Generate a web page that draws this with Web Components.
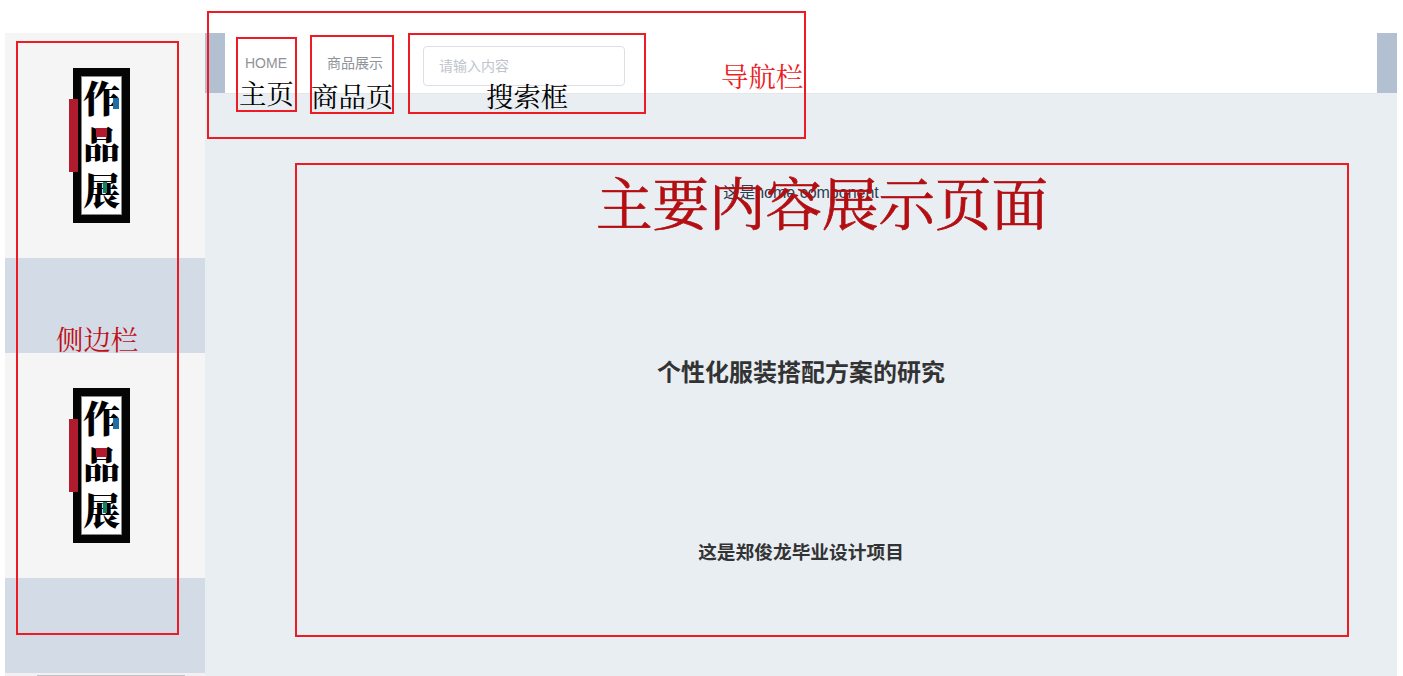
<!DOCTYPE html>
<html lang="zh">
<head>
<meta charset="utf-8">
<title>作品展</title>
<style>
  html, body { margin: 0; height: 676px; overflow: hidden; background: #fff; }
  body { font-family: "Liberation Sans", "Noto Sans CJK SC", sans-serif; }
</style>
</head>
<body>
<app-shell>
  <side-bar></side-bar>
  <main-pane>
    <top-nav slot="head"></top-nav>
    <home-view></home-view>
  </main-pane>
</app-shell>

<note-box x="16" y="41" w="163" h="594"></note-box>
<note-box x="207" y="11" w="599" h="128"></note-box>
<note-box x="236" y="37" w="61" h="75"></note-box>
<note-box x="310" y="35" w="84" h="79"></note-box>
<note-box x="408" y="33" w="238" h="81"></note-box>
<note-box x="295" y="163" w="1054" h="474"></note-box>

<note-label x="721" y="59" size="27.4" color="#ed1c24">导航栏</note-label>
<note-label x="239" y="76" size="27.4" color="#000">主页</note-label>
<note-label x="311" y="79" size="27.4" color="#000">商品页</note-label>
<note-label x="486" y="79" size="27.4" color="#000">搜索框</note-label>
<note-label x="56" y="322" size="27.4" color="#c00f17">侧边栏</note-label>
<note-label x="596" y="167" size="56.5" color="#b30f13" stroke="0.7">主要内容展示页面</note-label>

<script>
class AppShell extends HTMLElement {
  constructor() {
    super();
    this.attachShadow({ mode: "open" });
    this.shadowRoot.innerHTML = `
      <style>
        :host { display: flex; width: 1392px; height: 643px; margin: 33px 0 0 5px; }
      </style>
      <slot></slot>
    `;
  }
}

class SideBar extends HTMLElement {
  constructor() {
    super();
    this.attachShadow({ mode: "open" });
    this.shadowRoot.innerHTML = `
      <style>
        :host { display: flex; flex-direction: column; flex: none; width: 200px; background: #d3dce6; }
        .list { flex: 1; display: flex; flex-direction: column; gap: 95px; }
        .track { height: 3px; background: #f1f1f4; padding-left: 32px; }
        .thumb { width: 148px; height: 1px; margin-top: 2px; background: #c1c1c1; }
      </style>
      <div class="list">
        <logo-card></logo-card>
        <logo-card></logo-card>
      </div>
      <div class="track"><div class="thumb"></div></div>
    `;
  }
}

class LogoCard extends HTMLElement {
  constructor() {
    super();
    this.attachShadow({ mode: "open" });
    this.shadowRoot.innerHTML = `
      <style>
        :host { display: block; height: 225px; padding: 35px 0 0 68px; box-sizing: border-box; background: #f5f5f5; }
        .frame {
          position: relative; box-sizing: border-box; width: 57px; height: 155px;
          border: 8px solid #050505; background: #fff; outline: 1px solid #888; outline-offset: -9px;
          display: flex; flex-direction: column; align-items: center; gap: 8px; padding-top: 2px;
          font: 900 37px/38px "Noto Serif CJK SC", "Noto Sans CJK SC", serif; color: #000;
        }
        span { display: block; height: 38px; }
        .bar { position: absolute; left: -12px; top: 23px; width: 9px; height: 73px; background: #b01c2e; }
        .dot { position: absolute; }
        .blue { left: 32px; top: 22px; width: 6px; height: 11px; background: #1d6fa5; }
        .red { left: 15px; top: 52px; width: 11px; height: 9px; background: #b01c2e; }
        .green { left: 22px; top: 106px; width: 4px; height: 11px; background: #1b7f5c; }
      </style>
      <div class="frame">
        <i class="bar"></i>
        <span>作</span><span>品</span><span>展</span>
        <i class="dot blue"></i><i class="dot red"></i><i class="dot green"></i>
      </div>
    `;
  }
}

class MainPane extends HTMLElement {
  constructor() {
    super();
    this.attachShadow({ mode: "open" });
    this.shadowRoot.innerHTML = `
      <style>
        :host { display: flex; flex-direction: column; flex: 1; min-width: 0; height: 643px; background: #e9eef3; }
      </style>
      <slot name="head"></slot>
      <slot></slot>
    `;
  }
}

class TopNav extends HTMLElement {
  constructor() {
    super();
    this.attachShadow({ mode: "open" });
    this.shadowRoot.innerHTML = `
      <style>
        :host { display: block; flex: none; height: 60px; padding: 0 20px; background: #b3c0d1; }
        ul {
          position: relative; display: flex; box-sizing: border-box; height: 61px; margin: 0; padding: 0;
          list-style: none; background: #fff; border-bottom: 1px solid #e6e6e6;
        }
        li { padding: 0 20px; font-size: 14px; line-height: 60px; color: #909399; }
        li.search { padding-top: 13px; }
        input {
          display: block; box-sizing: border-box; width: 202px; height: 40px; padding: 0 15px;
          border: 1px solid #dcdfe6; border-radius: 4px; outline: 0; background: #fff;
          font: 14px "Liberation Sans", "Noto Sans CJK SC", sans-serif; color: #606266;
        }
        input::placeholder { color: #c0c4cc; opacity: 1; }
      </style>
      <ul>
        <li>HOME</li>
        <li>商品展示</li>
        <li class="search"><input placeholder="请输入内容"></li>
      </ul>
    `;
  }
}

class HomeView extends HTMLElement {
  constructor() {
    super();
    this.attachShadow({ mode: "open" });
    this.shadowRoot.innerHTML = `
      <style>
        :host { display: block; flex: 1; padding-top: 90px; text-align: center; color: #2c3e50; }
        p { margin: 0; font-size: 16px; line-height: 20px; }
        h1 { margin: 154px 0 0; font-size: 24px; line-height: 32px; color: #333; }
        h3 { margin: 151px 0 0; font-size: 18.72px; line-height: 26px; color: #333; }
      </style>
      <p>这是home component</p>
      <h1>个性化服装搭配方案的研究</h1>
      <h3>这是郑俊龙毕业设计项目</h3>
    `;
  }
}

// the red boxes drawn over the screenshot
class NoteBox extends HTMLElement {
  constructor() {
    super();
    this.attachShadow({ mode: "open" });
    this.shadowRoot.innerHTML = `
      <style>
        :host { position: absolute; box-sizing: border-box; border: 2px solid #ed1c24; pointer-events: none; }
      </style>
    `;
  }
  connectedCallback() {
    this.style.left = this.getAttribute("x") + "px";
    this.style.top = this.getAttribute("y") + "px";
    this.style.width = this.getAttribute("w") + "px";
    this.style.height = this.getAttribute("h") + "px";
  }
}

class NoteLabel extends HTMLElement {
  constructor() {
    super();
    this.attachShadow({ mode: "open" });
    this.shadowRoot.innerHTML = `
      <style>
        :host { position: absolute; white-space: nowrap; line-height: 1.2; font-family: "Noto Serif CJK SC", "Noto Sans CJK SC", serif; font-weight: 400; }
      </style>
      <slot></slot>
    `;
  }
  connectedCallback() {
    this.style.left = this.getAttribute("x") + "px";
    this.style.top = this.getAttribute("y") + "px";
    this.style.fontSize = this.getAttribute("size") + "px";
    this.style.color = this.getAttribute("color");
    if (this.hasAttribute("stroke")) this.style.webkitTextStroke = this.getAttribute("stroke") + "px";
  }
}

customElements.define("app-shell", AppShell);
customElements.define("side-bar", SideBar);
customElements.define("logo-card", LogoCard);
customElements.define("main-pane", MainPane);
customElements.define("top-nav", TopNav);
customElements.define("home-view", HomeView);
customElements.define("note-box", NoteBox);
customElements.define("note-label", NoteLabel);
</script>
</body>
</html>
